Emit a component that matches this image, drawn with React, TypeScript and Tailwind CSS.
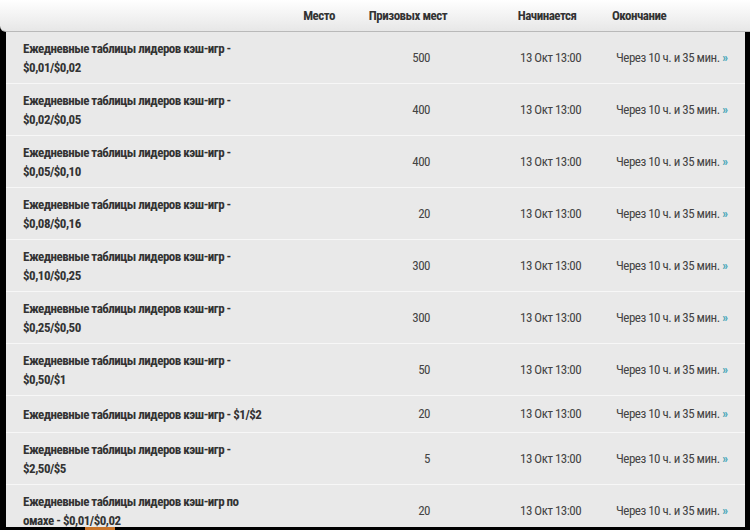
const rows: { name: [string, string?]; prizes: number }[] = [
  { name: ["Ежедневные таблицы лидеров кэш-игр -", "$0,01/$0,02"], prizes: 500 },
  { name: ["Ежедневные таблицы лидеров кэш-игр -", "$0,02/$0,05"], prizes: 400 },
  { name: ["Ежедневные таблицы лидеров кэш-игр -", "$0,05/$0,10"], prizes: 400 },
  { name: ["Ежедневные таблицы лидеров кэш-игр -", "$0,08/$0,16"], prizes: 20 },
  { name: ["Ежедневные таблицы лидеров кэш-игр -", "$0,10/$0,25"], prizes: 300 },
  { name: ["Ежедневные таблицы лидеров кэш-игр -", "$0,25/$0,50"], prizes: 300 },
  { name: ["Ежедневные таблицы лидеров кэш-игр -", "$0,50/$1"], prizes: 50 },
  { name: ["Ежедневные таблицы лидеров кэш-игр - $1/$2"], prizes: 20 },
  { name: ["Ежедневные таблицы лидеров кэш-игр -", "$2,50/$5"], prizes: 5 },
  { name: ["Ежедневные таблицы лидеров кэш-игр по", "омахе - $0,01/$0,02"], prizes: 20 },
];

export default function App() {
  return (
    <div className="relative w-[750px] h-[530px] overflow-hidden bg-black font-['Roboto',sans-serif] text-[13px] tracking-[-0.5px] [font-stretch:80%]">
      {/* header */}
      <div className="relative z-10 flex h-[32px] items-center rounded-bl-[6px] border-b border-[#b9b9b9] bg-gradient-to-b from-[#ffffff] to-[#e7e7e7] font-bold text-[#333]">
        <div className="w-[290px]" />
        <div className="w-[58px] text-center">Место</div>
        <div className="w-[120px] text-center">Призовых мест</div>
        <div className="w-[30px]" />
        <div className="w-[98px] text-center">Начинается</div>
        <div className="w-[16px]" />
        <div>Окончание</div>
      </div>

      {/* body */}
      <div className="ml-[6px] mr-[5px] h-[495px] overflow-hidden bg-[#e9e9e9]">
        {rows.map((r, i) => (
          <div
            key={i}
            className={`flex items-center border-b border-[#f7f7f7] text-[#444] ${
              r.name[1] ? "h-[52px]" : "h-[37px]"
            }`}
          >
            <div className="w-[284px] pl-[17px] font-bold leading-[19px] text-[#333]">
              <div>{r.name[0]}</div>
              {r.name[1] && <div>{r.name[1]}</div>}
            </div>
            <div className="w-[58px]" />
            <div className="w-[82px] text-right">{r.prizes}</div>
            <div className="w-[90px]" />
            <div className="w-[96px]">13 Окт 13:00</div>
            <div>
              Через 10 ч. и 35 мин. <span className="font-bold text-[#4aa6b8]">»</span>
            </div>
          </div>
        ))}
      </div>
      <div className="absolute bottom-0 left-[85px] h-[3px] w-[30px] bg-[#c8742a]" />
    </div>
  );
}
